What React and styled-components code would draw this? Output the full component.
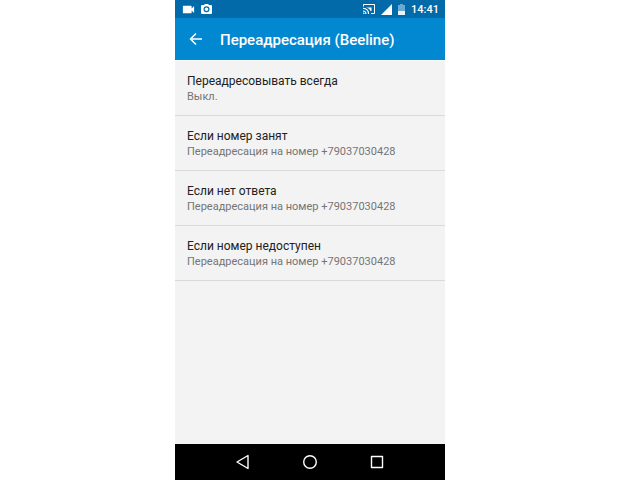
import React from "react";
import styled, { createGlobalStyle } from "styled-components";
import { MdVideocam } from "react-icons/md";

const options = [
  { title: "Переадресовывать всегда", summary: "Выкл." },
  { title: "Если номер занят", summary: "Переадресация на номер +79037030428" },
  { title: "Если нет ответа", summary: "Переадресация на номер +79037030428" },
  { title: "Если номер недоступен", summary: "Переадресация на номер +79037030428" },
];

const App = () => {
  return (
    <Page>
      <GlobalStyle />
      <Phone>
        <StatusBar>
          <StatusGroup $gap="5px">
            <MdVideocam size={15} />
            <Camera />
          </StatusGroup>
          <StatusGroup $gap="6px">
            <Cast />
            <Signal />
            <Battery />
            <Clock>14:41</Clock>
          </StatusGroup>
        </StatusBar>
        <AppBar>
          <IconButton aria-label="Назад">
            <BackIcon viewBox="0 0 16 16">
              <path d="M14 8H3M8 2.500L2.500 8L8 13.500" />
            </BackIcon>
          </IconButton>
          <Title>Переадресация (Beeline)</Title>
        </AppBar>
        <List>
          {options.map((item) => (
            <li key={item.title}>
              <Option>
                <OptionTitle>{item.title}</OptionTitle>
                <OptionSummary>{item.summary}</OptionSummary>
              </Option>
            </li>
          ))}
        </List>
        <NavBar>
          <IconButton aria-label="Назад">
            <NavIcon viewBox="0 0 16 16">
              <path d="M13 1.500v13L2 8z" />
            </NavIcon>
          </IconButton>
          <IconButton aria-label="Главный экран">
            <NavIcon viewBox="0 0 16 16">
              <circle cx="8" cy="8" r="6.3" />
            </NavIcon>
          </IconButton>
          <IconButton aria-label="Недавние">
            <NavIcon viewBox="0 0 16 16">
              <path d="M2.500 2.500h11v11h-11z" />
            </NavIcon>
          </IconButton>
        </NavBar>
      </Phone>
    </Page>
  );
};

const Camera = () => (
  <svg width="11" height="10" viewBox="0 0 11 10" aria-hidden="true">
    <path d="M1 1h2l1-1h3l1 1h2a1 1 0 0 1 1 1v7a1 1 0 0 1-1 1H1a1 1 0 0 1-1-1V2a1 1 0 0 1 1-1z" fill="#fff" />
    <circle cx="5.5" cy="5.3" r="2.400" fill="#fff" stroke="#026aa9" strokeWidth="1.200" />
  </svg>
);

const Cast = () => (
  <svg width="12" height="10" viewBox="0 0 12 10" aria-hidden="true" fill="none" stroke="#fff">
    <path d="M.5 2.500v-2h11v9H8" />
    <path d="M0 4.500a5 5 0 0 1 5.500 5.500M0 7a3 3 0 0 1 3 3" strokeWidth="1.200" />
    <path d="M3 3.500h5.500v3.500H7.500Q6.500 4 3 3.500z" fill="#fff" stroke="none" />
    <circle cx=".8" cy="9.200" r=".8" fill="#fff" stroke="none" />
  </svg>
);

const Signal = () => (
  <svg width="11" height="11" viewBox="0 0 11 11" aria-hidden="true">
    <path d="M11 0v11H0z" fill="#fff" />
  </svg>
);

const Battery = () => (
  <svg width="7" height="11" viewBox="0 0 7 11" aria-hidden="true">
    <path d="M2 0h3v1h2v6H0V1h2z" fill="#6aa9d2" />
    <path d="M0 7h7v4H0z" fill="#e6f3fb" />
  </svg>
);

export default App;

const GlobalStyle = createGlobalStyle`
  * {
    box-sizing: border-box;
  }
  body {
    margin: 0;
    background: #fff;
    font-family: Roboto, "Liberation Sans", sans-serif;
  }
`;

const Page = styled.div`
  display: flex;
  justify-content: center;
  min-height: 100vh;
  padding-right: 20px;
`;

const Phone = styled.main`
  display: flex;
  flex-direction: column;
  width: 270px;
  max-width: 100%;
  background: #f3f3f3;
`;

const StatusBar = styled.div`
  display: flex;
  align-items: center;
  justify-content: space-between;
  height: 18px;
  padding: 0 6px;
  background: #026aa9;
  color: #fff;
`;

const StatusGroup = styled.div`
  display: flex;
  align-items: center;
  gap: ${(props) => props.$gap};
`;

const Clock = styled.time`
  padding-top: 1px;
  font-size: 11px;
  font-weight: 500;
  line-height: 17px;
`;

const AppBar = styled.header`
  display: flex;
  align-items: center;
  gap: 16px;
  height: 42px;
  padding: 0 13px;
  background: #0288d1;
  color: #fff;
`;

const IconButton = styled.button`
  display: flex;
  padding: 0;
  border: 0;
  background: none;
  color: #fff;
  cursor: pointer;
`;

const BackIcon = styled.svg`
  width: 16px;
  height: 16px;
  fill: none;
  stroke: #fff;
  stroke-width: 1.5;
`;

const Title = styled.h1`
  margin: 0;
  padding-top: 2px;
  font-size: 15px;
  font-weight: 500;
  line-height: 20px;
`;

const List = styled.ul`
  flex: 1;
  margin: 0;
  padding: 0;
  border-top: 1px solid #fafafa;
  list-style: none;
`;

const Option = styled.button`
  display: flex;
  flex-direction: column;
  width: 100%;
  padding: 12px 12px 11px;
  border: 0;
  border-bottom: 1px solid #dadada;
  background: none;
  font-family: inherit;
  text-align: left;
  cursor: pointer;
`;

const OptionTitle = styled.span`
  color: #212121;
  font-size: 12px;
  line-height: 17px;
`;

const OptionSummary = styled.span`
  color: #757575;
  font-size: 11px;
  line-height: 14px;
`;

const NavBar = styled.nav`
  display: flex;
  align-items: center;
  justify-content: center;
  gap: 51px;
  height: 36px;
  background: #000;
`;

const NavIcon = styled.svg`
  width: 16px;
  height: 16px;
  fill: none;
  stroke: #fff;
  stroke-width: 1.4;
  stroke-linejoin: round;
`;
